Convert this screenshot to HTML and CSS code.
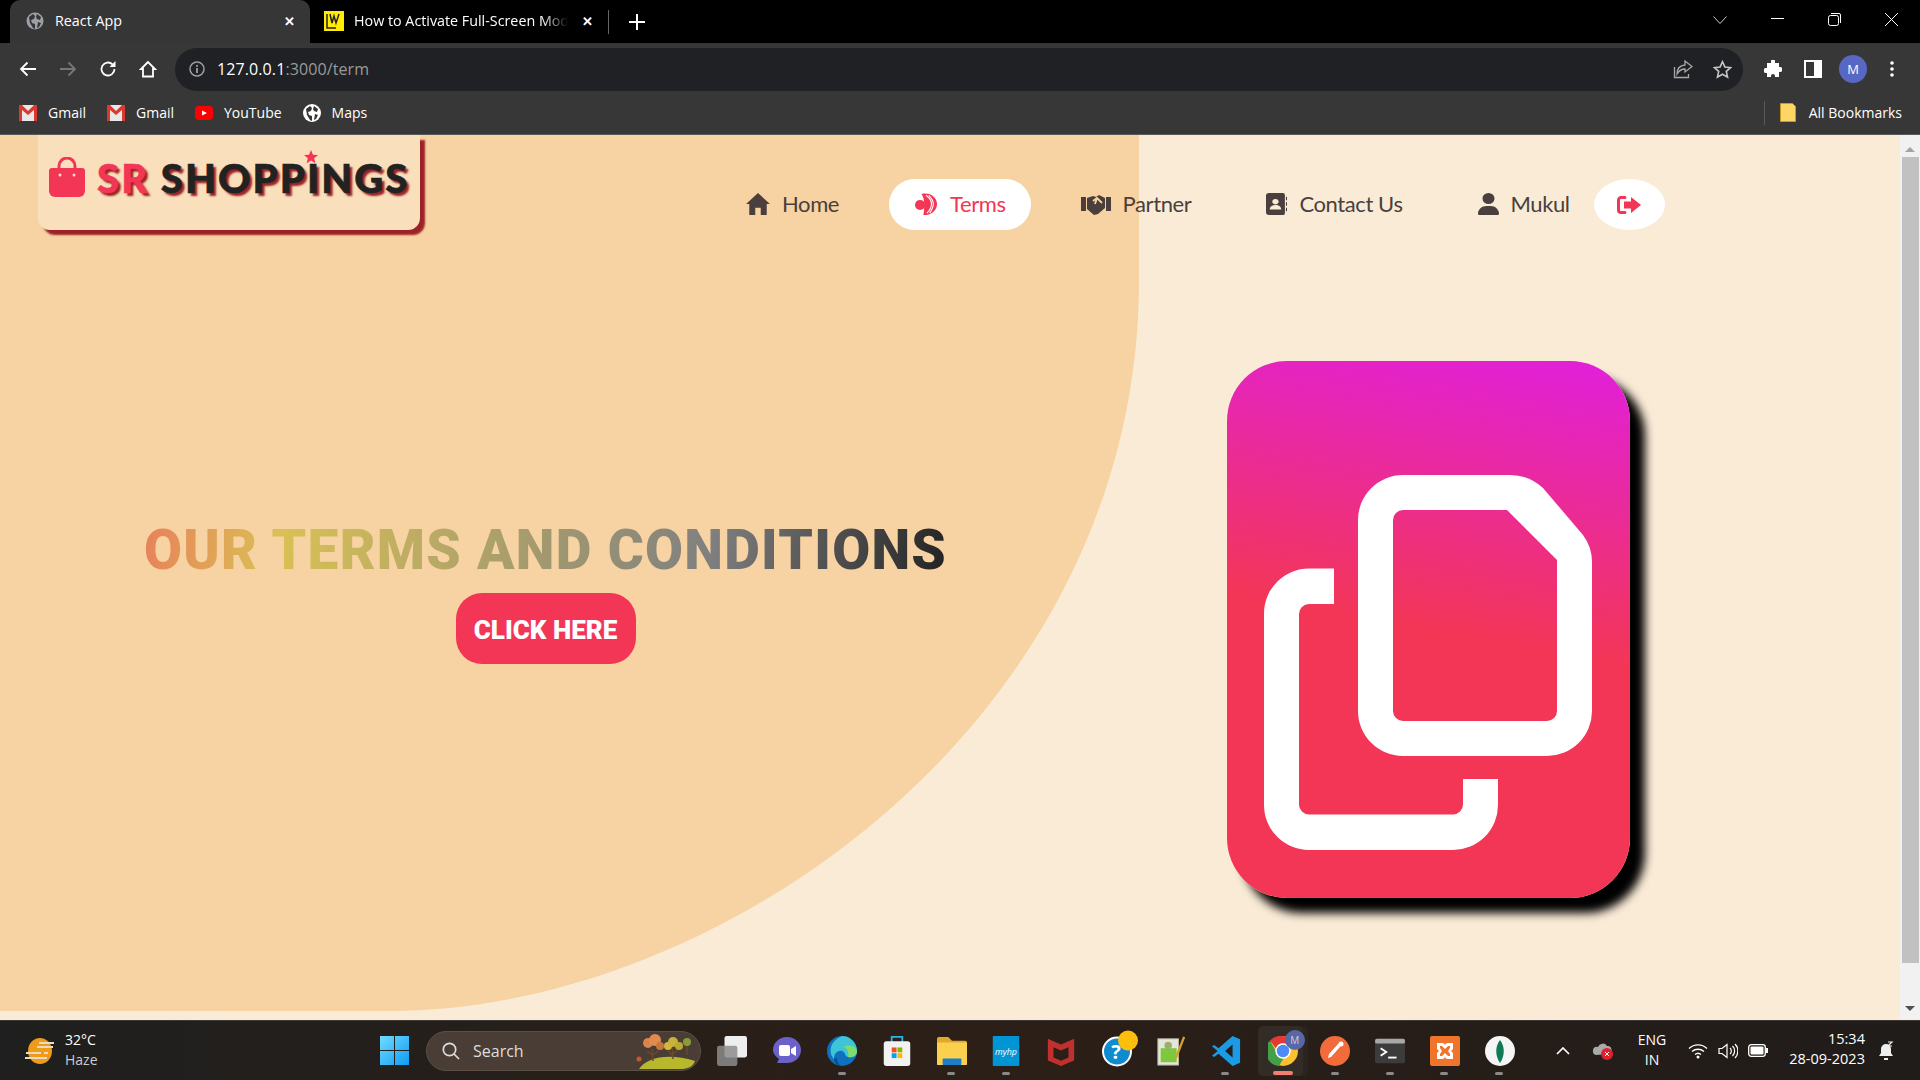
FILE: index.html
```html
<!DOCTYPE html>
<html lang="en">
<head>
  <meta charset="UTF-8">
  <meta name="viewport" content="width=device-width, initial-scale=1.0">
  <title>React App</title>
  <link rel="stylesheet" href="styles.css">
</head>
<body>
  <!-- browser tabs -->
  <div class="tabstrip">
    <div class="tab tab-active">
      <svg class="tab-icon" viewBox="0 0 18 18"><circle cx="9" cy="9" r="8.5" fill="#9aa0a6"/><path d="M3 5l4-3 2 2-1 3-3 1 1 3 3 1v5l-2-1-3-5zM11 2l4 3-1 3-3-1-1-2zM12 10l3 1-2 4-2 1z" fill="#363636"/></svg>
      <span class="tab-title">React App</span>
      <span class="tab-close">&#10005;</span>
    </div>
    <div class="tab tab-other">
      <svg class="tab-icon wide" viewBox="0 0 20 20"><rect width="20" height="20" fill="#ffec00"/><path d="M3 3v14h9M6 3l2 9 2-7 2 7 3-9" fill="none" stroke="#222" stroke-width="1.5"/></svg>
      <span class="tab-title fade">How to Activate Full-Screen Mode</span>
      <span class="tab-close">&#10005;</span>
    </div>
    <span class="tab-sep"></span>
    <svg class="new-tab" viewBox="0 0 16 16"><path d="M8 0v16M0 8h16" stroke="#fff" stroke-width="2"/></svg>
    <div class="win-controls">
      <svg class="win-chevron" viewBox="0 0 14 8"><path d="M.5.5L7 7.5 13.5.5" fill="none" stroke="#ccc"/></svg>
      <svg class="win-min" viewBox="0 0 13 13"><path d="M0 6.5h13" stroke="#fff"/></svg>
      <svg class="win-max" viewBox="0 0 13 13"><rect x=".5" y="2.5" width="10" height="10" rx="2" fill="none" stroke="#fff"/><path d="M3 .5h8a1.5 1.5 0 0 1 1.500 1.500v8" fill="none" stroke="#fff"/></svg>
      <svg class="win-close" viewBox="0 0 13 13"><path d="M0 0l13 13M13 0L0 13" stroke="#fff"/></svg>
    </div>
  </div>

  <!-- address bar -->
  <div class="toolbar">
    <svg class="tool-icon back" viewBox="0 0 18 16"><path d="M17 8H2M8.500 1.500L2 8l6.500 6.500" fill="none" stroke="#fff" stroke-width="1.800"/></svg>
    <svg class="tool-icon forward" viewBox="0 0 18 16"><path d="M1 8h15M9.500 1.500L16 8l-6.500 6.500" fill="none" stroke="#777" stroke-width="1.800"/></svg>
    <svg class="tool-icon reload" viewBox="0 0 18 18"><path d="M15.500 9a6.500 6.500 0 1 1-2-4.700" fill="none" stroke="#fff" stroke-width="1.800"/><path d="M16.500 1v6h-6z" fill="#fff"/></svg>
    <svg class="tool-icon home" viewBox="0 0 18 18"><path d="M9 2L2 9h2v7.500h10V9h2z" fill="none" stroke="#fff" stroke-width="1.800"/></svg>
    <div class="omnibox">
      <svg class="info" viewBox="0 0 16 16"><circle cx="8" cy="8" r="7" fill="none" stroke="#9aa0a6" stroke-width="1.500"/><path d="M8 7v5M8 4v1.800" stroke="#9aa0a6" stroke-width="1.800"/></svg>
      <span class="url">127.0.0.1<span class="url-dim">:3000/term</span></span>
      <svg class="share" viewBox="0 0 20 20"><path d="M1.500 8v10.500h14V15" fill="none" stroke="#a8a8a8" stroke-width="1.300"/><path d="M12 2l7 5.500-7 5.500V10c-4 0-6 1.500-8 5 0-5 3-8.500 8-9z" fill="none" stroke="#a8a8a8" stroke-width="1.300"/></svg>
      <svg class="star" viewBox="0 0 20 20"><path d="M10 1.800l2.500 5.500 6 .7-4.500 4 1.300 6L10 15l-5.300 3 1.300-6-4.500-4 6-.7z" fill="none" stroke="#c4c7c5" stroke-width="1.700"/></svg>
    </div>
    <svg class="puzzle" viewBox="0 0 18 18"><path d="M7 1a2 2 0 0 1 4 0v2h4v4h1a2.500 2.500 0 0 1 0 5h-1v5h-4v-1a2 2 0 0 0-4 0v1H3v-4H2a2.500 2.500 0 0 1 0-5h1V3h4z" fill="#fff"/></svg>
    <svg class="side-panel" viewBox="0 0 18 18"><path d="M0 0h18v18H0zM2 2v14h8V2z" fill="#fff" fill-rule="evenodd"/></svg>
    <span class="avatar">M</span>
    <svg class="menu-dots" viewBox="0 0 4 16"><circle cx="2" cy="2" r="1.800" fill="#fff"/><circle cx="2" cy="8" r="1.800" fill="#fff"/><circle cx="2" cy="14" r="1.800" fill="#fff"/></svg>
  </div>

  <!-- bookmarks -->
  <div class="bookmarks">
    <div class="bookmark">
      <svg viewBox="0 0 18 16"><rect width="18" height="16" fill="#e8e8e8"/><path d="M0 0h3l6 6 6-6h3v16h-3V5L9 10 3 5v11H0z" fill="#d93a30"/></svg>
      <span>Gmail</span>
    </div>
    <div class="bookmark">
      <svg viewBox="0 0 18 16"><rect width="18" height="16" fill="#e8e8e8"/><path d="M0 0h3l6 6 6-6h3v16h-3V5L9 10 3 5v11H0z" fill="#d93a30"/></svg>
      <span>Gmail</span>
    </div>
    <div class="bookmark">
      <svg viewBox="0 0 18 16"><rect y="1" width="18" height="14" rx="4" fill="#f00"/><path d="M7 5.500l5 2.500-5 2.500z" fill="#fff"/></svg>
      <span>YouTube</span>
    </div>
    <div class="bookmark">
      <svg viewBox="0 0 18 18"><circle cx="9" cy="9" r="9" fill="#fff"/><path d="M3 5l4-3 2 2-1 3-3 1 1 3 3 1v5l-2-1-3-5zM11 2l4 3-1 3-3-1-1-2zM12 10l3 1-2 4-2 1z" fill="#363636"/></svg>
      <span>Maps</span>
    </div>
    <div class="all-bookmarks">
      <svg viewBox="0 0 16 19"><path d="M.5.500h12l3 3v15H.5z" fill="#fdd663" stroke="#c79a2a"/></svg>
      <span>All Bookmarks</span>
    </div>
  </div>

  <!-- page -->
  <div class="viewport">
    <div class="page">
      <svg class="blob" viewBox="0 0 1139 876"><path d="M0 0H1139V145C1139 585 720 876 390 876H0Z" fill="#f7d2a2"/></svg>

      <header class="header">
        <div class="logo">
          <svg class="logo-bag" viewBox="0 0 36 40"><path d="M10 12V9a8 8 0 0 1 16 0v3" fill="none" stroke="#f33656" stroke-width="3"/><path d="M3 11h30a3 3 0 0 1 3 3v20a6 6 0 0 1-6 6H6a6 6 0 0 1-6-6V14a3 3 0 0 1 3-3z" fill="#f33656"/><circle cx="11" cy="18" r="1.500" fill="#f9dfbc"/><circle cx="25" cy="18" r="1.500" fill="#f9dfbc"/></svg>
          <span class="logo-text"><span class="logo-sr">SR</span> SHOPPINGS</span>
          <svg class="logo-star" viewBox="0 0 14 14"><path d="M7 0l2 4.700 5 .4-3.800 3.200 1.200 5L7 10.600l-4.400 2.700 1.200-5L0 5.100l5-.4z" fill="#f33656"/></svg>
        </div>
        <nav class="nav">
          <a class="nav-link">
            <svg class="nav-icon" viewBox="0 0 26 24"><path d="M13 0L0 12h3.500v12H10v-8h6v8h6.500V12H26z"/></svg>
            Home
          </a>
          <a class="nav-link active">
            <svg class="nav-icon" viewBox="0 0 24 24"><circle cx="5.500" cy="13" r="5.500"/><path d="M7 1c10-2 17 4 17 11s-7 13-15 12c1-3 1-7 1-12S9 4 7 1z"/><path d="M12 2.500c4 3 6 6 6 9.500s-2 7-5 10M15 2.500c3 3 5 6 5 9.500s-2 7-4 10" fill="none" stroke="#fff" stroke-width="1.200"/></svg>
            Terms
          </a>
          <a class="nav-link">
            <svg class="nav-icon shake" viewBox="0 0 30 22"><path d="M0 4h5v14H0zM25 4h5v14h-5z"/><path d="M6 5l6-2 3 1 3-2 6 3v10l-7 6-4 1-7-6z"/><path d="M12 8l4-3 5 5M16 5l-2 6" fill="none" stroke="#f7d2a2" stroke-width="1.800"/></svg>
            Partner
          </a>
          <a class="nav-link">
            <svg class="nav-icon narrow" viewBox="0 0 20 24" preserveAspectRatio="none"><path d="M3 0h13a2 2 0 0 1 2 2v20a2 2 0 0 1-2 2H3a3 3 0 0 1-3-3V3a3 3 0 0 1 3-3zM9 6.500a3 3 0 1 0 .01 0zM3.500 18h11c0-3-2-5-5.500-5s-5.500 2-5.500 5z" fill-rule="evenodd"/><path d="M19 4h1v4h-1zM19 10h1v4h-1zM19 16h1v4h-1z"/></svg>
            Contact Us
          </a>
          <a class="nav-link">
            <svg class="nav-icon narrow" viewBox="0 0 448 512" preserveAspectRatio="none"><path d="M224 256A128 128 0 1 0 224 0a128 128 0 1 0 0 256zm-45.700 48C79.800 304 0 383.800 0 482.300C0 498.700 13.300 512 29.700 512H418.300c16.400 0 29.700-13.300 29.700-29.700C448 383.800 368.200 304 269.700 304H178.300z"/></svg>
            Mukul
          </a>
          <button class="logout">
            <svg viewBox="0 0 24 18"><path d="M8 1.500H4A2.500 2.500 0 0 0 1.500 4v10A2.500 2.500 0 0 0 4 16.500h4" fill="none" stroke="#f33656" stroke-width="3" stroke-linecap="round"/><path d="M14 1l10 8-10 8v-4.500H7v-7h7z" fill="#f33656"/></svg>
          </button>
        </nav>
      </header>

      <main class="hero">
        <div class="hero-text">
          <h1 class="hero-title">OUR TERMS AND CONDITIONS</h1>
          <button class="cta">CLICK HERE</button>
        </div>
        <div class="doc-card">
          <svg viewBox="0 0 403 537">
            <path fill="#fff" fill-rule="evenodd" d="M176 114H283Q302 114 316 127L356 174Q365 186 365 201V350A45 45 0 0 1 320 395H176A45 45 0 0 1 131 350V159A45 45 0 0 1 176 114ZM176 149A10 10 0 0 0 166 159V350A10 10 0 0 0 176 360H320A10 10 0 0 0 330 350V199L280 149Z"/>
            <path fill="#fff" d="M107 207.500H82A45 45 0 0 0 37 252.500V444A45 45 0 0 0 82 489H226A45 45 0 0 0 271 444V418H236V443.500A10 10 0 0 1 226 453.500H82A10 10 0 0 1 72 443.500V253A10 10 0 0 1 82 243H107Z"/>
          </svg>
        </div>
      </main>
    </div>
    <div class="scrollbar">
      <span class="arrow-up"></span>
      <span class="thumb"></span>
      <span class="arrow-down"></span>
    </div>
  </div>

  <!-- windows taskbar -->
  <footer class="taskbar">
    <div class="weather">
      <svg viewBox="0 0 30 26"><ellipse cx="15" cy="13" rx="12" ry="13" fill="#f09a1a"/><path d="M14 5h15M12 9h16M1 15h15M19 15h4M0 20h22" stroke="#e9dcc0" stroke-width="2"/></svg>
      <div class="weather-text"><span>32°C</span><span class="dim">Haze</span></div>
    </div>
    <svg class="start" viewBox="0 0 29 29"><defs><linearGradient id="win" x1="0" y1="0" x2="1" y2="1"><stop offset="0" stop-color="#6fdcff"/><stop offset="1" stop-color="#0f9bf5"/></linearGradient></defs><path d="M0 0h14v14H0zM15 0h14v14H15zM0 15h14v14H0zM15 15h14v14H15z" fill="url(#win)"/></svg>
    <div class="search">
      <svg class="search-glass" viewBox="0 0 18 18"><circle cx="7.500" cy="7.500" r="6.200" fill="none" stroke="#ddd" stroke-width="1.700"/><path d="M12 12l5 5" stroke="#ddd" stroke-width="1.700"/></svg>
      <span>Search</span>
      <svg class="search-art" viewBox="0 0 62 36"><path d="M4 36c8-12 30-16 56-8-2 6-8 8-14 8z" fill="#b7b82c"/><path d="M18 28l-1-12M12 18l5 4M23 18l-5 4M38 26l-1-12M33 18l4 4M43 17l-5 4M52 22V12" fill="none" stroke="#6b4a2a" stroke-width="1.500"/><circle cx="13" cy="10" r="5" fill="#d9854a"/><circle cx="20" cy="7" r="6" fill="#e08c50"/><circle cx="25" cy="13" r="4" fill="#c9763e"/><circle cx="33" cy="13" r="4" fill="#d5b83a"/><circle cx="38" cy="9" r="5" fill="#c9b23a"/><circle cx="44" cy="13" r="4" fill="#b9a832"/><circle cx="52" cy="9" r="4" fill="#8a9a3a"/><circle cx="4" cy="26" r="2.500" fill="#c8582a"/></svg>
    </div>
    <div class="task-apps">
      <span class="task-app">
        <svg viewBox="0 0 28 28"><rect x="7" width="21" height="20" rx="2" fill="#eee"/><rect y="9" width="19" height="19" rx="2" fill="#8c8c8c" opacity=".85"/></svg>
      </span>
      <span class="task-app">
        <svg viewBox="0 0 28 30"><path d="M14 1c8 0 14 6 14 13s-6 13-14 13H4l2-4C2 20 0 17 0 14 0 7 6 1 14 1z" fill="#6a62c8"/><rect x="6" y="9" width="11" height="11" rx="2" fill="#fff"/><path d="M18 13l5-3v10l-5-3z" fill="#fff"/></svg>
      </span>
      <span class="task-app dot">
        <svg viewBox="0 0 30 30"><circle cx="15" cy="15" r="15" fill="#0f70bf"/><path d="M15 0a15 15 0 0 1 15 15c0 6-5 7-9 6-4-1-2-5-6-6-5-1-8 3-8 8C2 18 1 6 15 0z" fill="#3dc4d8"/><path d="M30 15c0 5-5 7-9 6 1-4 0-9-5-10 6-3 13-1 14 4z" fill="#7ddc6a"/><path d="M7 23c0 4 4 7 8 7-3-1-5-4-5-8z" fill="#0a4f90"/></svg>
      </span>
      <span class="task-app">
        <svg viewBox="0 0 30 34"><path d="M9 7V1h12v6" fill="none" stroke="#2bb5e8" stroke-width="2"/><rect y="6" width="30" height="28" rx="3" fill="#f2f2f2"/><path d="M9 13h5.500v5.500H9z" fill="#f25022"/><path d="M15.500 13H21v5.500h-5.500z" fill="#7fba00"/><path d="M9 19.500h5.500V25H9z" fill="#00a4ef"/><path d="M15.500 19.500H21V25h-5.500z" fill="#ffb900"/></svg>
      </span>
      <span class="task-app dot">
        <svg viewBox="0 0 32 30"><path d="M0 2a2 2 0 0 1 2-2h10l4 4h14a2 2 0 0 1 2 2v4H0z" fill="#e0a92a"/><rect y="6" width="32" height="24" rx="1" fill="#fbd04e"/><rect x="6" y="23" width="20" height="7" rx="1" fill="#1a7fc8"/></svg>
      </span>
      <span class="task-app dot">
        <svg viewBox="0 0 30 34"><rect width="30" height="34" rx="1" fill="#0096d6"/><text class="hp-label" x="15" y="21" text-anchor="middle">myhp</text></svg>
      </span>
      <span class="task-app">
        <svg viewBox="0 0 28 32"><path d="M0 3l14 6 14-6v23l-14 6-14-6zM6 12v11l8 3.500 8-3.500V12l-8 3.500z" fill="#c0302e" fill-rule="evenodd"/></svg>
      </span>
      <span class="task-app">
        <svg class="help" viewBox="0 0 36 38"><circle cx="19" cy="19.500" r="14" fill="#0f8bd0" stroke="#fff" stroke-width="2"/><text class="help-mark" x="18" y="27" text-anchor="middle">?</text><circle cx="30" cy="8.500" r="10" fill="#fdbf0d"/></svg>
      </span>
      <span class="task-app">
        <svg viewBox="0 0 30 32"><rect x="1" y="3" width="22" height="28" fill="#e6e6d8" stroke="#b5b5a5"/><rect x="4" y="13" width="17" height="15" fill="#7ec83e"/><circle cx="12" cy="10" r="4" fill="#9ab06a"/><path d="M20 24L29 1" stroke="#d3a12a" stroke-width="2.500"/></svg>
      </span>
      <span class="task-app dot">
        <svg viewBox="0 0 30 32"><path d="M22 0l8 3.500v25L22 32 7 19l-4.500 3.500L0 21l6-5-6-5 2.500-1.500L7 13zM22 9l-8 7 8 7z" fill="#1b9ae5" fill-rule="evenodd"/></svg>
      </span>
      <span class="task-app chrome">
        <svg viewBox="0 0 30 30"><circle cx="15" cy="15" r="15" fill="#fbc02d"/><path d="M15 0a15 15 0 0 1 13 7.500H15a7.500 7.500 0 0 0-7 5L2 4.500A15 15 0 0 1 15 0z" fill="#e53935"/><path d="M2 4.500l6.500 12a7.500 7.500 0 0 0 7 6L11 30A15 15 0 0 1 2 4.500z" fill="#43a047"/><circle cx="15" cy="15" r="7" fill="#4c8bf5" stroke="#fff" stroke-width="1.500"/></svg>
        <span class="chrome-badge">M</span>
      </span>
      <span class="task-app dot">
        <svg viewBox="0 0 30 30"><circle cx="15" cy="15" r="15" fill="#f26b3a"/><path d="M8 22l3-1 9-10 1-4-3 1-9 10z" fill="#fff"/><circle cx="21" cy="8" r="2.500" fill="#fff"/></svg>
      </span>
      <span class="task-app dot">
        <svg viewBox="0 0 32 26"><rect width="32" height="26" rx="2" fill="#3c3c3c"/><rect width="32" height="5" rx="2" fill="#a8a8a8"/><path d="M6 10l6 4-6 4" fill="none" stroke="#fff" stroke-width="2"/><path d="M14 20h9" stroke="#fff" stroke-width="2"/></svg>
      </span>
      <span class="task-app dot">
        <svg viewBox="0 0 30 30"><rect width="30" height="30" rx="2" fill="#f0752a"/><path d="M7 7h5a3 3 0 0 1 3 3 3 3 0 0 1 3-3h5v6l-2 2 2 2v6h-5a3 3 0 0 1-3-3 3 3 0 0 1-3 3H7v-6l2-2-2-2zM10 10v2l2 3-2 3v2h2l3-3 3 3h2v-2l-2-3 2-3v-2h-2l-3 3-3-3z" fill="#fff" fill-rule="evenodd"/></svg>
      </span>
      <span class="task-app dot">
        <svg viewBox="0 0 30 30"><circle cx="15" cy="15" r="15" fill="#f5f5f5"/><path d="M15 4c5 6 5 16 0 23-5-7-5-17 0-23z" fill="#0f7a55"/></svg>
      </span>
    </div>
    <div class="tray">
      <svg class="tray-up" viewBox="0 0 14 8"><path d="M1 7l6-6 6 6" fill="none" stroke="#fff" stroke-width="1.700"/></svg>
      <svg class="tray-cloud" viewBox="0 0 20 18"><path d="M3 13a4 4 0 0 1 2-8 5 5 0 0 1 9-1 4 4 0 0 1 1 8z" fill="#aaa"/><circle cx="14" cy="12" r="6" fill="#e0202e"/><path d="M12 10l4 4M16 10l-4 4" stroke="#fff"/></svg>
      <div class="lang"><span>ENG</span><span>IN</span></div>
      <svg class="tray-wifi" viewBox="0 0 20 16"><path d="M1 5.500a13 13 0 0 1 18 0M4 8.500a9 9 0 0 1 12 0M7 11.500a4.500 4.500 0 0 1 6 0" fill="none" stroke="#fff" stroke-width="1.400"/><circle cx="10" cy="14" r="1.500" fill="#fff"/></svg>
      <svg class="tray-sound" viewBox="0 0 20 16"><path d="M1 5.500h3L9 1.500v13L4 10.500H1z" fill="none" stroke="#fff" stroke-width="1.200"/><path d="M12 5a4 4 0 0 1 0 6M14.500 3a7 7 0 0 1 0 10M17 1a10 10 0 0 1 0 14" fill="none" stroke="#fff" stroke-width="1.200"/></svg>
      <svg class="tray-battery" viewBox="0 0 20 13"><rect x=".7" y=".7" width="16.600" height="11.600" rx="2.500" fill="none" stroke="#fff" stroke-width="1.300"/><rect x="2.500" y="2.500" width="13" height="8" rx="1" fill="#fff"/><rect x="18" y="4" width="2" height="5" fill="#fff"/></svg>
      <div class="clock"><span>15:34</span><span>28-09-2023</span></div>
      <svg class="tray-bell" viewBox="0 0 16 20"><path d="M8 3a5 5 0 0 1 5 5v4l2 3H1l2-3V8a5 5 0 0 1 5-5z" fill="#eee"/><path d="M6 17h4v2H6z" fill="#eee"/><path d="M10 1h4l-4 4h4" fill="none" stroke="#eee" stroke-width="1.200"/></svg>
    </div>
  </footer>
</body>
</html>
```
FILE: styles.css
```css
* {
  margin: 0;
  padding: 0;
  box-sizing: border-box;
}

body {
  display: flex;
  flex-direction: column;
  width: 1920px;
  height: 1080px;
  overflow: hidden;
  font-family: "Open Sans", "Noto Sans", sans-serif;
  color: #fff;
}

svg {
  display: block;
  flex-shrink: 0;
}

/* tab strip */
.tabstrip {
  display: flex;
  align-items: center;
  height: 43px;
  padding-left: 10px;
  background-color: #000;
}

.tab {
  display: flex;
  align-items: center;
  height: 43px;
  padding-bottom: 2px;
  font-size: 14.300px;
}

.tab-active {
  width: 300px;
  padding-left: 16px;
  padding-right: 15px;
  background-color: #363636;
  border-radius: 10px 10px 0 0;
}

.tab-other {
  width: 298px;
  padding-left: 14px;
  padding-right: 15px;
}

.tab-icon {
  width: 18px;
  height: 18px;
  margin-right: 11px;
}

.tab-icon.wide {
  width: 20px;
  height: 20px;
  margin-right: 10px;
}

.tab-title {
  flex: 1;
  white-space: nowrap;
  overflow: hidden;
}

.tab-title.fade {
  -webkit-mask-image: linear-gradient(to right, #000 88%, transparent);
  mask-image: linear-gradient(to right, #000 88%, transparent);
}

.tab-close {
  margin-left: 14px;
  font-size: 13px;
  font-weight: 600;
}

.tab-sep {
  width: 1px;
  height: 24px;
  background-color: #666;
}

.new-tab {
  width: 16px;
  height: 16px;
  margin-left: 20px;
}

.win-controls {
  display: flex;
  align-items: center;
  height: 100%;
  margin-left: auto;
  padding-right: 22px;
}

.win-chevron {
  width: 14px;
  height: 8px;
  margin-top: -4px;
}

.win-min,
.win-max,
.win-close {
  width: 13px;
  height: 13px;
  margin-top: -5px;
  margin-left: 44px;
}

.win-min {
  margin-top: -7px;
}

/* toolbar */
.toolbar {
  display: flex;
  align-items: center;
  height: 49px;
  padding: 3px 26px 0 19px;
  background-color: #373737;
}

.tool-icon {
  width: 18px;
  height: 18px;
}

.tool-icon.forward,
.tool-icon.reload,
.tool-icon.home {
  margin-left: 22px;
}

.omnibox {
  display: flex;
  align-items: center;
  width: 1569px;
  height: 43px;
  margin-left: 18px;
  padding: 0 11px 0 14px;
  background-color: #202124;
  border-radius: 22px;
}

.info {
  width: 16px;
  height: 16px;
}

.url {
  margin-left: 12px;
  font-size: 16px;
  letter-spacing: 0.1px;
}

.url-dim {
  color: #9a9a9a;
}

.share {
  width: 20px;
  height: 20px;
  margin-left: auto;
}

.star {
  width: 19px;
  height: 19px;
  margin-left: 20px;
}

.puzzle {
  width: 18px;
  height: 18px;
  margin-left: 21px;
}

.side-panel {
  width: 18px;
  height: 18px;
  margin-left: 22px;
}

.avatar {
  display: flex;
  justify-content: center;
  align-items: center;
  width: 28px;
  height: 28px;
  margin-left: 17px;
  background-color: #5768c4;
  border-radius: 50%;
  font-size: 13px;
}

.menu-dots {
  width: 4px;
  height: 16px;
  margin-left: 23px;
}

/* bookmarks bar */
.bookmarks {
  display: flex;
  align-items: center;
  height: 43px;
  padding: 0 18px 1px 19px;
  background-color: #373737;
  border-bottom: 1px solid #5a5a5a;
  font-size: 14px;
}

.bookmark {
  display: flex;
  align-items: center;
  gap: 11px;
  margin-right: 21px;
}

.bookmark svg {
  width: 18px;
  height: 18px;
}

.all-bookmarks {
  display: flex;
  align-items: center;
  height: 24px;
  margin-left: auto;
  padding-left: 15px;
  border-left: 1px solid #5a5a5a;
}

.all-bookmarks svg {
  width: 16px;
  height: 19px;
  margin-right: 13px;
}

/* page */
.viewport {
  display: flex;
  height: 885px;
}

.page {
  position: relative;
  flex: 1;
  background-color: #faebd7;
  overflow: hidden;
}

.blob {
  position: absolute;
  top: 0;
  left: 0;
  width: 1139px;
  height: 876px;
}

.header,
.hero {
  position: relative;
  display: flex;
}

.logo {
  position: relative;
  display: flex;
  align-items: flex-start;
  width: 382px;
  height: 95px;
  margin-left: 38px;
  padding: 22px 0 0 11px;
  background-color: #f9dfbc;
  border-radius: 0 0 12px 12px;
  box-shadow: 5px 5px 2px #9b2226;
}

.logo-bag {
  width: 36px;
  height: 40px;
}

.logo-text {
  margin-left: 12px;
  margin-top: -3px;
  font-family: Lato, sans-serif;
  font-size: 40px;
  font-weight: 900;
  line-height: 48px;
  letter-spacing: 2.100px;
  white-space: nowrap;
  color: #222;
  -webkit-text-stroke: 0.6px currentColor;
  text-shadow: 3px 3px 2px #9b2226;
}

.logo-sr {
  color: #f33656;
}

.logo-star {
  position: absolute;
  top: 15px;
  left: 266px;
  width: 14px;
  height: 14px;
}

.nav {
  display: flex;
  align-items: center;
  gap: 25px;
  height: 51px;
  margin-top: 44px;
  margin-left: 301px;
}

.nav-link {
  display: flex;
  align-items: center;
  gap: 12px;
  height: 51px;
  padding: 0 25px 2px;
  border-radius: 26px;
  font-family: Lato, sans-serif;
  font-size: 22px;
  letter-spacing: -0.4px;
  color: #4a3f3c;
  fill: #4a3f3c;
}

.nav-link.active {
  background-color: #fff;
  color: #f33656;
  fill: #f33656;
}

.nav-icon {
  width: 24px;
  height: 22px;
}

.nav-icon.shake {
  width: 30px;
}

.nav-icon.narrow {
  width: 21px;
}

.logout {
  display: flex;
  justify-content: center;
  align-items: center;
  width: 71px;
  height: 51px;
  margin-left: -26px;
  background-color: #fff;
  border: none;
  border-radius: 50%;
}

.logout svg {
  width: 24px;
  height: 18px;
}

.hero {
  margin-top: 131px;
}

.hero-text {
  display: flex;
  flex-direction: column;
  align-items: center;
  width: 1091px;
  padding-top: 157px;
}

.hero-title {
  font-family: Roboto, sans-serif;
  font-size: 55px;
  font-weight: 900;
  line-height: 64px;
  letter-spacing: 1.300px;
  white-space: nowrap;
  color: transparent;
  background-image: linear-gradient(100deg, #e8805a, #d9c155 17%, #808080 70%, #222);
  -webkit-background-clip: text;
  background-clip: text;
}

.cta {
  width: 180px;
  height: 71px;
  margin-top: 11px;
  padding-top: 2px;
  background-color: #f33656;
  border: none;
  border-radius: 26px;
  font-family: Roboto, sans-serif;
  font-size: 26px;
  font-weight: 900;
  color: #fff;
}

.doc-card {
  width: 403px;
  height: 537px;
  margin-left: 136px;
  background-image: linear-gradient(190deg, #e11fdd, #f33656 50%);
  border-radius: 60px;
  box-shadow: 15px 15px 10px #000;
}

.doc-card svg {
  width: 403px;
  height: 537px;
}

/* page scrollbar */
.scrollbar {
  display: flex;
  flex-direction: column;
  align-items: center;
  width: 20px;
  background-color: #f1f1f1;
}

.arrow-up {
  width: 0;
  height: 0;
  margin-top: 12px;
  border-left: 5px solid transparent;
  border-right: 5px solid transparent;
  border-bottom: 5px solid #a3a3a3;
}

.thumb {
  width: 17px;
  height: 806px;
  margin-top: 5px;
  background-color: #c1c1c1;
}

.arrow-down {
  width: 0;
  height: 0;
  margin-top: 43px;
  border-left: 5px solid transparent;
  border-right: 5px solid transparent;
  border-top: 5px solid #505050;
}

/* taskbar */
.taskbar {
  position: relative;
  display: flex;
  align-items: center;
  height: 60px;
  background-image: linear-gradient(to right, #1f1f1f, #2c1f17 50%, #201c1a);
  border-top: 1px solid #3b3836;
  font-size: 14px;
}

.weather {
  display: flex;
  align-items: center;
  width: 380px;
  padding-left: 25px;
}

.weather svg {
  width: 30px;
  height: 26px;
}

.weather-text {
  display: flex;
  flex-direction: column;
  margin-top: -2px;
  margin-left: 10px;
  line-height: 20px;
}

.dim {
  color: #ccc;
}

.start {
  width: 29px;
  height: 29px;
}

.search {
  display: flex;
  align-items: center;
  width: 275px;
  height: 40px;
  margin-left: 17px;
  padding: 0 3px 0 15px;
  background-color: #4a3d35;
  border: 1px solid #5c4f46;
  border-radius: 20px;
  font-size: 16px;
  color: #ddd;
}

.search-glass {
  width: 18px;
  height: 18px;
  margin-right: 13px;
}

.search-art {
  width: 62px;
  height: 36px;
  margin-left: auto;
}

.task-apps {
  display: flex;
  align-items: center;
  margin-left: 4px;
}

.task-app {
  position: relative;
  display: flex;
  justify-content: center;
  align-items: center;
  width: 54.800px;
  height: 59px;
}

.task-app svg {
  width: 30px;
  height: 30px;
}

.task-app svg.help {
  width: 36px;
  height: 38px;
  overflow: visible;
}

.task-app.dot::after {
  content: "";
  position: absolute;
  bottom: 5px;
  left: 23px;
  width: 8px;
  height: 3px;
  background-color: #8a8a8a;
  border-radius: 2px;
}

.task-app.chrome {
  width: 44.800px;
  height: 50px;
  margin: 0 5px;
  padding-left: 6px;
  background-color: #322b26;
  border-radius: 5px;
  box-shadow: 5px 0 0 #2b2521;
}

.task-app.chrome::after {
  content: "";
  position: absolute;
  bottom: 1px;
  left: 15px;
  width: 20px;
  height: 4px;
  background-color: #f08070;
  border-radius: 2px;
}

.chrome-badge {
  position: absolute;
  top: 4px;
  right: -2px;
  display: flex;
  justify-content: center;
  align-items: center;
  width: 20px;
  height: 20px;
  background-color: #5768a8;
  border-radius: 50%;
  font-size: 10px;
  color: #ccd;
}

.hp-label {
  font-family: "Open Sans", sans-serif;
  font-size: 10px;
  font-style: italic;
  fill: #fff;
}

.help-mark {
  font-family: "Open Sans", sans-serif;
  font-size: 20px;
  font-weight: 700;
  fill: #fff;
}

.tray {
  display: flex;
  align-items: center;
  margin-left: 29px;
}

.tray-up {
  width: 14px;
  height: 8px;
}

.tray-cloud {
  width: 20px;
  height: 18px;
  margin-left: 23px;
}

.lang {
  display: flex;
  flex-direction: column;
  align-items: center;
  width: 30px;
  margin-top: -2px;
  margin-left: 24px;
  line-height: 20px;
}

.tray-wifi,
.tray-sound {
  width: 20px;
  height: 16px;
}

.tray-wifi {
  margin-left: 21px;
}

.tray-sound {
  margin-left: 10px;
}

.tray-battery {
  width: 20px;
  height: 13px;
  margin-left: 10px;
}

.clock {
  display: flex;
  flex-direction: column;
  align-items: flex-end;
  width: 76px;
  margin-top: -3px;
  margin-left: 21px;
  font-size: 14.500px;
  line-height: 20px;
}

.tray-bell {
  width: 16px;
  height: 20px;
  margin-left: 13px;
}
```
